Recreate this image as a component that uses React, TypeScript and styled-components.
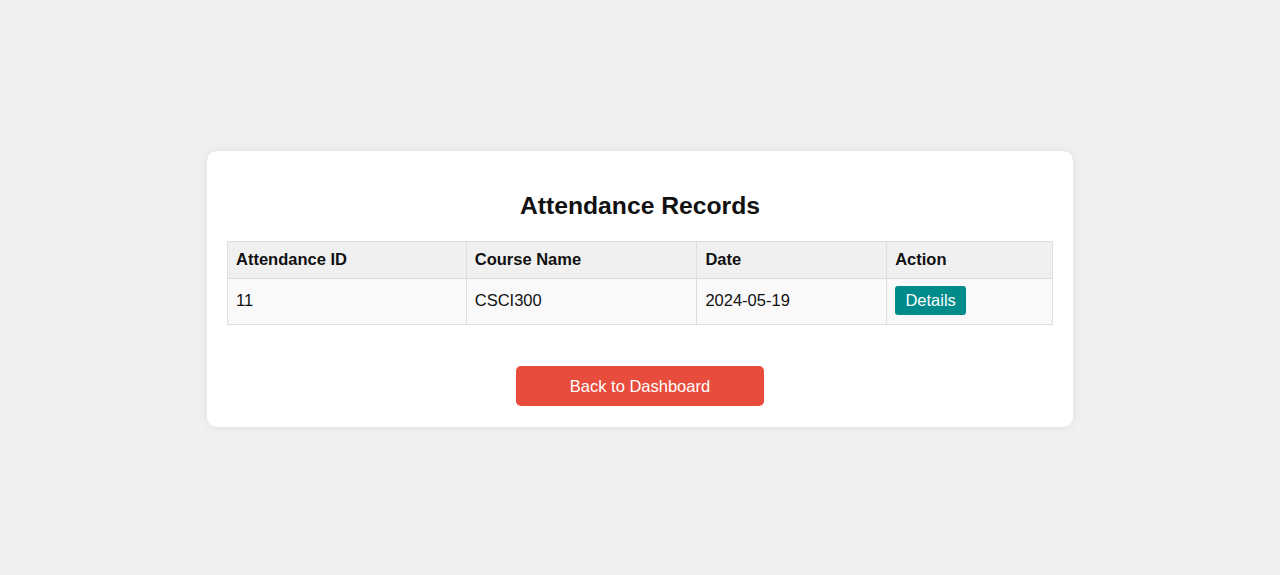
import React from "react";
import styled, { createGlobalStyle } from "styled-components";

const Global = createGlobalStyle`
  html, body { margin: 0; padding: 0; }
  body {
    background: #f0f0f0;
    font-family: "Liberation Sans", Arial, sans-serif;
    color: #111;
  }
`;

const Page = styled.div`
  box-sizing: border-box;
  min-height: 575px;
  padding-top: 151px;
  display: flex;
  align-items: flex-start;
  justify-content: center;
`;

const Card = styled.div`
  box-sizing: border-box;
  width: 866px;
  background: #fff;
  border-radius: 10px;
  box-shadow: 0 0 10px rgba(0, 0, 0, 0.08);
  padding: 20px 20px 21px;
  display: flex;
  flex-direction: column;
  align-items: center;
`;

const Title = styled.h2`
  margin: 21px 0 21px;
  font-size: 24.7px;
  font-weight: bold;
  color: #111;
  line-height: 28px;
`;

const Table = styled.table`
  width: 100%;
  border-collapse: collapse;
  font-size: 16.5px;
`;

const Th = styled.th<{ $w: number }>`
  box-sizing: border-box;
  width: ${(p) => p.$w}px;
  text-align: left;
  background: #f0f0f0;
  border: 1px solid #ddd;
  padding: 0 8px 1px;
  height: 37px;
  font-weight: bold;
  color: #111;
`;

const Td = styled.td`
  box-sizing: border-box;
  background: #f9f9f9;
  border: 1px solid #ddd;
  padding: 0 8px 2px;
  height: 46px;
  color: #111;
`;

const DetailsButton = styled.button`
  background: #008b8b;
  color: #fff;
  border: none;
  border-radius: 3px;
  font-family: "Liberation Sans", Arial, sans-serif;
  font-size: 16.5px;
  padding: 0 10px;
  width: 71px;
  height: 29px;
  cursor: pointer;
`;

const BackButton = styled.button`
  margin-top: 41px;
  width: 30%;
  height: 40px;
  background: #e74c3c;
  color: #fff;
  border: none;
  border-radius: 5px;
  font-family: "Liberation Sans", Arial, sans-serif;
  font-size: 16.5px;
  cursor: pointer;
`;

const columns = [
  { label: "Attendance ID", w: 239 },
  { label: "Course Name", w: 231 },
  { label: "Date", w: 190 },
  { label: "Action", w: 166 },
];

export default function App() {
  return (
    <>
      <Global />
      <Page>
        <Card>
          <Title>Attendance Records</Title>
          <Table>
            <thead>
              <tr>
                {columns.map((c) => (
                  <Th key={c.label} $w={c.w}>
                    {c.label}
                  </Th>
                ))}
              </tr>
            </thead>
            <tbody>
              <tr>
                <Td>11</Td>
                <Td>CSCI300</Td>
                <Td>2024-05-19</Td>
                <Td>
                  <DetailsButton>Details</DetailsButton>
                </Td>
              </tr>
            </tbody>
          </Table>
          <BackButton>Back to Dashboard</BackButton>
        </Card>
      </Page>
    </>
  );
}
